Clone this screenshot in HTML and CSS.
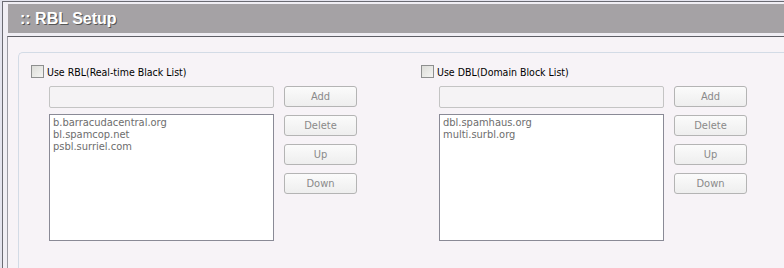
FILE: index.html
```html
<!DOCTYPE html>
<html lang="en">
<head>
  <meta charset="UTF-8">
  <title>RBL Setup</title>
  <link rel="stylesheet" href="styles.css">
</head>
<body>
  <div class="frame">
    <div class="title-bar">
      <h2>:: RBL Setup</h2>
    </div>

    <div class="panel">
      <div class="group">
        <!-- RBL -->
        <div class="col">
          <label class="check"><input type="checkbox" disabled> Use RBL(Real-time Black List)</label>
          <div class="editor">
            <div class="fields">
              <input type="text" class="entry" disabled>
              <div class="listbox">
                <div class="item">b.barracudacentral.org</div>
                <div class="item">bl.spamcop.net</div>
                <div class="item">psbl.surriel.com</div>
              </div>
            </div>
            <div class="buttons">
              <button disabled>Add</button>
              <button disabled>Delete</button>
              <button disabled>Up</button>
              <button disabled>Down</button>
            </div>
          </div>
        </div>

        <!-- DBL -->
        <div class="col">
          <label class="check"><input type="checkbox" disabled> Use DBL(Domain Block List)</label>
          <div class="editor">
            <div class="fields">
              <input type="text" class="entry" disabled>
              <div class="listbox">
                <div class="item">dbl.spamhaus.org</div>
                <div class="item">multi.surbl.org</div>
              </div>
            </div>
            <div class="buttons">
              <button disabled>Add</button>
              <button disabled>Delete</button>
              <button disabled>Up</button>
              <button disabled>Down</button>
            </div>
          </div>
        </div>
      </div>
    </div>
  </div>
</body>
</html>
```

FILE: styles.css
```css
html,
body {
  height: 100%;
}

body {
  margin: 0;
  padding: 0;
  background-color: #e4e4ee;
  font-family: "DejaVu Sans Condensed", "DejaVu Sans", sans-serif;
  font-size: 11px;
  overflow: hidden;
}

.frame {
  display: flex;
  flex-direction: column;
  height: calc(100% - 1px);
  margin: 1px 0 0 2px;
  padding: 2px 0 0 4px;
  border-top: 1px solid #6b6b73;
  border-left: 1px solid #6b6b73;
  background-color: #f0eef4;
  box-sizing: border-box;
}

.title-bar {
  flex: none;
  margin-left: 1px;
  height: 29px;
  background-color: #a5a2a5;
}

.title-bar h2 {
  margin: 0;
  padding-left: 12px;
  font-family: "Liberation Sans", Arial, sans-serif;
  font-size: 16px;
  font-weight: bold;
  line-height: 29px;
  color: #fff;
  text-shadow: 1px 1px 0 #555;
}

.panel {
  flex: 1;
  display: flex;
  margin-top: 3px;
  padding: 15px 0 0 10px;
  border-top: 1px solid #5f5f66;
  border-left: 1px solid #9a9aa2;
  background-color: #f7f3f7;
}

/* fieldset keeps going past the right and bottom edges */
.group {
  flex: 1;
  display: flex;
  padding: 12px 0 0 12px;
  border-top: 1px solid #d3dbe6;
  border-left: 1px solid #d3dbe6;
  border-top-left-radius: 5px;
}

.col {
  width: 390px;
}

.check {
  display: flex;
  align-items: center;
  height: 13px;
  margin-bottom: 8px;
  font-size: 10.5px;
  color: #000;
}

.check input {
  appearance: none;
  width: 13px;
  height: 13px;
  margin: 0 3px 0 0;
  border: 1px solid #8e8f8f;
  background: linear-gradient(135deg, #dcdcd8, #f4f4f2);
  box-sizing: border-box;
}

.editor {
  display: flex;
  margin-left: 18px;
}

.fields {
  width: 225px;
}

.entry {
  display: block;
  width: 225px;
  height: 22px;
  margin: 0;
  border: 1px solid #c4c4c4;
  border-radius: 2px;
  background-color: #f5f3f5;
  box-sizing: border-box;
}

.listbox {
  height: 127px;
  margin-top: 6px;
  padding: 2px 3px;
  border: 1px solid #8a8a96;
  background-color: #fff;
  box-sizing: border-box;
}

.item {
  line-height: 12px;
  color: #6d6d6d;
}

.buttons {
  display: flex;
  flex-direction: column;
  gap: 8px;
  margin-left: 10px;
}

.buttons button {
  width: 73px;
  height: 21px;
  padding: 0;
  border: 1px solid #b4b4b4;
  border-radius: 3px;
  background: linear-gradient(#fbfbfb, #eeeeee);
  font-family: inherit;
  font-size: 11px;
  color: #8a8a8a;
}
```
